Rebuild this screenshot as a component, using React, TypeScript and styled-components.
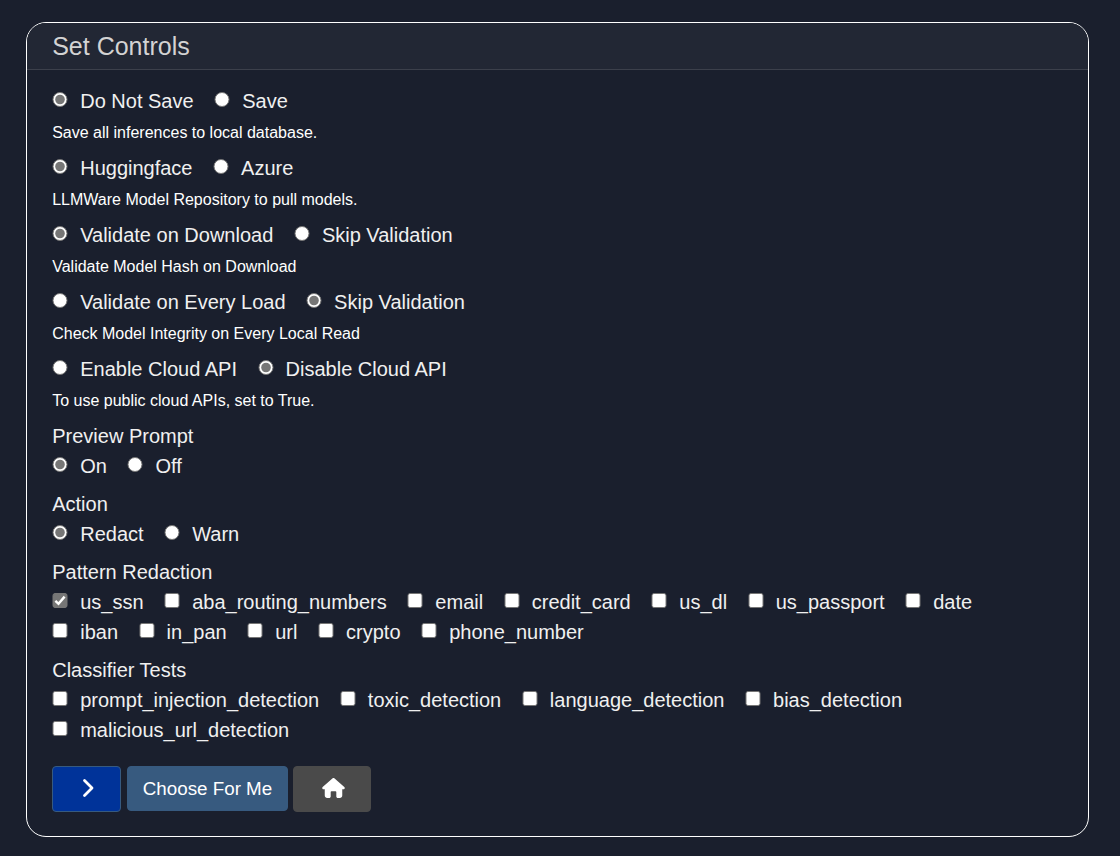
import React from "react";
import styled, { createGlobalStyle } from "styled-components";

const GlobalStyle = createGlobalStyle`
  *, *::before, *::after { box-sizing: border-box; }
  html, body { margin: 0; background: #1a1f2d; }
  body { font-family: "Liberation Sans", Arial, sans-serif; color: #f0f0f0; }
`;

const Page = styled.main`
  padding: 22px 31px 19px 26px;
  min-height: 856px;
`;

const Card = styled.section`
  display: flex;
  flex-direction: column;
  height: 815px;
  border: 1px solid #ffffff;
  border-radius: 20px;
`;

const CardHeader = styled.header`
  height: 47px;
  padding: 0 25.2px;
  border-bottom: 1px solid #3c404b;
  border-radius: 19px 19px 0 0;
  background: #222734;
  color: #d3d3d3;
  font-size: 25px;
  line-height: 46px;
`;

const CardBody = styled.div`
  padding: 16px 25.2px 0;
`;

const Setting = styled.div`
  height: 67px;
`;

const Group = styled.fieldset`
  margin: 0 0 8px;
  padding: 0;
  border: 0;
`;

const GroupLabel = styled.div`
  font-size: 20px;
  line-height: 30px;
`;

const Row = styled.div`
  display: flex;
  gap: 20.6px;
  height: 30px;
`;

const Option = styled.label`
  display: flex;
  font-size: 20px;
  line-height: 30px;
  white-space: pre;
`;

const Mark = styled.svg`
  flex: none;
  width: 16px;
  height: 16px;
  margin: 5.5px 12px 0 0;
`;

const Hint = styled.p`
  margin: 5px 0 0;
  color: #ffffff;
  font-size: 16px;
  line-height: 24px;
`;

const Actions = styled.div`
  display: flex;
  align-items: flex-start;
  margin: 21px 0 0 -0.2px;
`;

const Button = styled.button<{ $width: number; $height?: number; $bg: string; $border: string }>`
  display: flex;
  align-items: center;
  justify-content: center;
  width: ${(p) => p.$width}px;
  height: ${(p) => p.$height ?? 46}px;
  margin-right: 6px;
  padding: 0;
  border: 1px solid ${(p) => p.$border};
  border-radius: 4px;
  background: ${(p) => p.$bg};
  color: #ffffff;
  font-family: inherit;
  font-size: 18.8px;
  & + & + & { margin-left: -1px; }
  svg { margin: 0 0 2px 2px; }
`;

const settings = [
  { options: ["Do Not Save", "Save"], selected: 0, hint: "Save all inferences to local database." },
  { options: ["Huggingface", "Azure"], selected: 0, hint: "LLMWare Model Repository to pull models." },
  { options: ["Validate on Download", "Skip Validation"], selected: 0, hint: "Validate Model Hash on Download" },
  { options: ["Validate on Every Load", "Skip Validation"], selected: 1, hint: "Check Model Integrity on Every Local Read" },
  { options: ["Enable Cloud API", "Disable Cloud API"], selected: 1, hint: "To use public cloud APIs, set to True." },
];

const patterns = [
  ["us_ssn", "aba_routing_numbers", "email", "credit_card", "us_dl", "us_passport", "date"],
  ["iban", "in_pan", "url", "crypto", "phone_number"],
];

const classifiers = [
  ["prompt_injection_detection", "toxic_detection", "language_detection", "bias_detection"],
  ["malicious_url_detection"],
];

function RadioMark({ checked }: { checked: boolean }) {
  return (
    <Mark viewBox="0 0 16 16" role="radio" aria-checked={checked}>
      <circle cx="8" cy="7.5" r="7" fill="#ffffff" stroke="#767676" />
      {checked && <circle cx="8" cy="7.5" r="4.8" fill="#767676" />}
    </Mark>
  );
}

function CheckMark({ checked }: { checked: boolean }) {
  return (
    <Mark viewBox="0 0 16 16" role="checkbox" aria-checked={checked}>
      <rect x="1" y="0.5" width="14" height="14" rx="2" fill={checked ? "#767676" : "#ffffff"} stroke="#767676" />
      {checked && <path d="M3.4 7.8 6.5 10.800 12.6 3.600" fill="none" stroke="#ffffff" strokeWidth="2.4" />}
    </Mark>
  );
}

function RadioRow({ options, selected }: { options: string[]; selected: number }) {
  return (
    <Row role="radiogroup">
      {options.map((o, i) => (
        <Option key={o}>
          <RadioMark checked={i === selected} />
          {o}
        </Option>
      ))}
    </Row>
  );
}

function CheckGroup({ label, rows, checked }: { label: string; rows: string[][]; checked?: string }) {
  return (
    <Group>
      <GroupLabel>{label}</GroupLabel>
      {rows.map((row) => (
        <Row key={row[0]}>
          {row.map((o) => (
            <Option key={o}>
              <CheckMark checked={o === checked} />
              {o}
            </Option>
          ))}
        </Row>
      ))}
    </Group>
  );
}

export default function App() {
  return (
    <>
      <GlobalStyle />
      <Page>
        <Card>
          <CardHeader>Set Controls</CardHeader>
          <CardBody>
            {settings.map((s) => (
              <Setting key={s.hint}>
                <RadioRow options={s.options} selected={s.selected} />
                <Hint>{s.hint}</Hint>
              </Setting>
            ))}
            <Group>
              <GroupLabel>Preview Prompt</GroupLabel>
              <RadioRow options={["On", "Off"]} selected={0} />
            </Group>
            <Group>
              <GroupLabel>Action</GroupLabel>
              <RadioRow options={["Redact", "Warn"]} selected={0} />
            </Group>
            <CheckGroup label="Pattern Redaction" rows={patterns} checked="us_ssn" />
            <CheckGroup label="Classifier Tests" rows={classifiers} />
            <Actions>
              <Button $width={69} $bg="#003399" $border="#375a7f" aria-label="Next">
                <svg width="12" height="20" viewBox="0 0 12 20">
                  <path d="M2.5 2.5 10 10 2.5 17.5" fill="none" stroke="#fff" strokeWidth="2.8" strokeLinecap="round" strokeLinejoin="round" />
                </svg>
              </Button>
              <Button $width={161} $height={45} $bg="#375a7f" $border="#375a7f">Choose For Me</Button>
              <Button $width={78} $bg="#4a4a4a" $border="#4a4a4a" aria-label="Home">
                <svg width="23" height="20" viewBox="0 0 576 512">
                  <path fill="#fff" d="M575.8 255.5c0 18-15 32.1-32 32.1h-32l.7 160.2c0 36-28 64.2-64 64.2h-48.500c-22 0-40-18-40-40v-112c0-12-8-20-20-20h-104c-12 0-20 8-20 20v112c0 22-18 40-40 40H128c-35 0-64-28-64-64V287.600H32c-18 0-32-14-32-32.100 0-9 3-17 10-24L266.400 8c7-7 15-8 22-8s15 2 21 7l255 224.500c8 7 12 15 11.400 24z" />
                </svg>
              </Button>
            </Actions>
          </CardBody>
        </Card>
      </Page>
    </>
  );
}
